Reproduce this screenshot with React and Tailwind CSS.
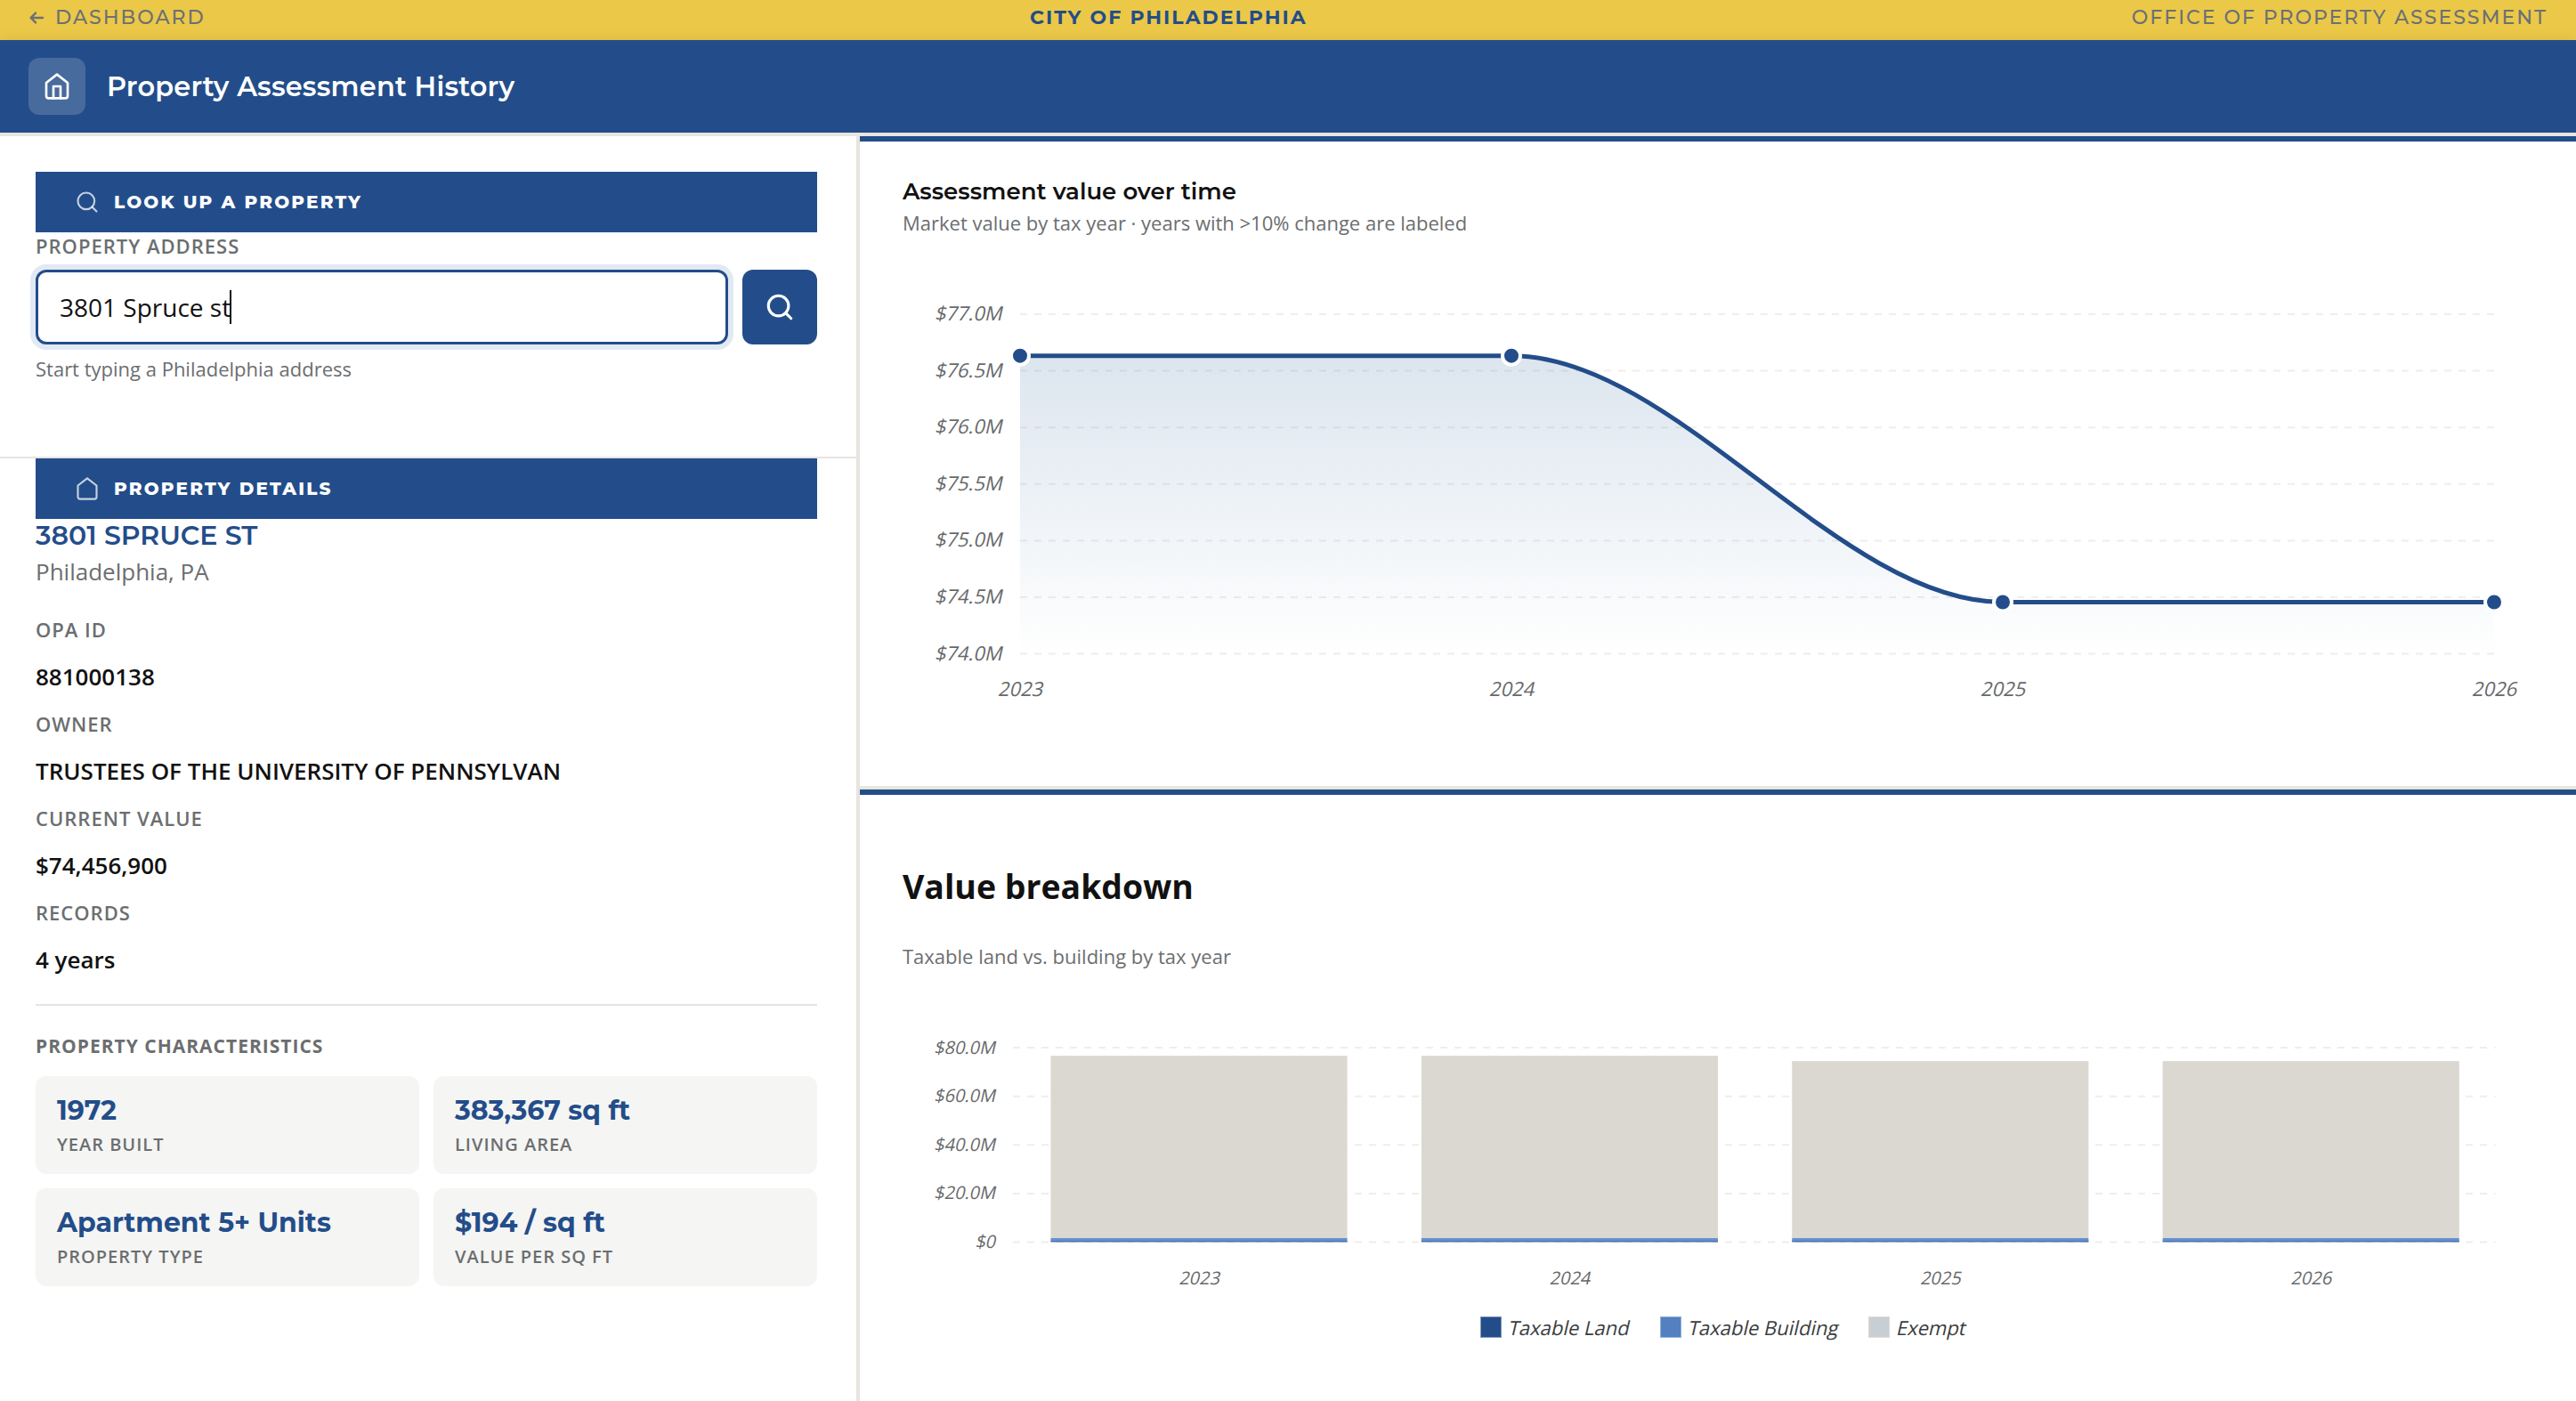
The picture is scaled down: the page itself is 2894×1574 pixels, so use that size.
import { Search } from 'lucide-react';

const DETAILS = [
  { label: 'OPA ID', value: '881000138' },
  { label: 'Owner', value: 'TRUSTEES OF THE UNIVERSITY OF PENNSYLVAN' },
  { label: 'Current Value', value: '$74,456,900' },
  { label: 'Records', value: '4 years' },
];

const CHARACTERISTICS = [
  { label: 'Year Built', value: '1972' },
  { label: 'Living Area', value: '383,367 sq ft' },
  { label: 'Property Type', value: 'Apartment 5+ Units' },
  { label: 'Value per sq ft', value: '$194 / sq ft' },
];

// values in millions
const HISTORY = [
  { year: '2023', total: 76.633 },
  { year: '2024', total: 76.633 },
  { year: '2025', total: 74.4569 },
  { year: '2026', total: 74.4569 },
];

const LEGEND = [
  { label: 'Taxable Land', swatch: 'bg-[#234d8a] border-[#7f97bc]' },
  { label: 'Taxable Building', swatch: 'bg-[#5580bf] border-[#8fb0de]' },
  { label: 'Exempt', swatch: 'bg-[#c8cfd4] border-[#e0dbd2]' },
];

function HouseIcon({ door = false, size, strokeWidth, className }) {
  return (
    <svg
      width={size}
      height={size}
      viewBox="0 0 24 24"
      fill="none"
      stroke="currentColor"
      strokeWidth={strokeWidth}
      strokeLinecap="round"
      strokeLinejoin="round"
      className={className}
    >
      <path d="M3 9l9-7 9 7v11a2 2 0 0 1-2 2H5a2 2 0 0 1-2-2z" />
      {door && <polyline points="9 22 9 12 15 12 15 22" />}
    </svg>
  );
}

function BackArrow() {
  return (
    <svg width="18" height="16" viewBox="0 0 18 16" fill="none" stroke="currentColor" strokeWidth="2.4" strokeLinecap="round" strokeLinejoin="round">
      <path d="M16 8H3M8 2.6L2.6 8L8 13.4" />
    </svg>
  );
}

function SectionHeader({ icon, children }) {
  return (
    <div className="flex h-[68px] items-center gap-4 bg-[#234d8a] px-11 text-white">
      {icon}
      <h2 className="font-['Montserrat',sans-serif] text-[20px] font-extrabold uppercase tracking-[2.2px]">{children}</h2>
    </div>
  );
}

// Slanted roman rather than the true italic, which is narrower
function AxisLabel({ x, y, anchor = 'middle', children }) {
  return (
    <text transform={`translate(${x} ${y}) skewX(-13)`} textAnchor={anchor} fill="#66696b">
      {children}
    </text>
  );
}

function LineChart() {
  const x = (i) => 132 + i * 552;
  const y = (v) => 87 + (77 - v) * 127.2;
  const top = y(HISTORY[0].total);
  const low = y(HISTORY[2].total);
  const base = y(74);
  const line = `M${x(0)} ${top}H${x(1)}C${x(1) + 184} ${top} ${x(2) - 184} ${low} ${x(2)} ${low}H${x(3)}`;
  const ticks = [77, 76.5, 76, 75.5, 75, 74.5, 74];

  return (
    <svg width="1832" height="560" viewBox="0 0 1832 560" className="overflow-visible text-[22px]">
      <defs>
        <linearGradient id="area-fill" x1="0" y1="0" x2="0" y2="1">
          <stop offset="0%" stopColor="#255d98" stopOpacity="0.16" />
          <stop offset="100%" stopColor="#255d98" stopOpacity="0" />
        </linearGradient>
      </defs>
      {ticks.map((t) => (
        <g key={t}>
          <line x1={x(0)} x2={x(3)} y1={y(t)} y2={y(t)} stroke="#efeeea" strokeWidth="2" strokeDasharray="8 8" />
          <AxisLabel x={111.5} y={y(t) + 7} anchor="end">{`$${t.toFixed(1)}M`}</AxisLabel>
        </g>
      ))}
      <path d={`${line}V${base}H${x(0)}Z`} fill="url(#area-fill)" />
      <path d={line} fill="none" stroke="#234d8a" strokeWidth="5" />
      {HISTORY.map((d, i) => (
        <g key={d.year}>
          <circle cx={x(i)} cy={y(d.total)} r="10" fill="#234d8a" stroke="#fff" strokeWidth="4" />
          <AxisLabel x={x(i)} y={516}>{d.year}</AxisLabel>
        </g>
      ))}
    </svg>
  );
}

function BarChart() {
  const left = 124;
  const band = 416.4;
  const y = (v) => 306.5 - v * 2.731;
  const ticks = [80, 60, 40, 20, 0];

  return (
    <svg width="1832" height="371" viewBox="0 0 1832 371" className="overflow-visible text-[20px]">
      {ticks.map((t) => (
        <g key={t}>
          <line x1={left} x2={left + band * 4} y1={y(t)} y2={y(t)} stroke="#efeeea" strokeWidth="2" strokeDasharray="8 8" />
          <AxisLabel x={104} y={y(t) + 6.5} anchor="end">{t ? `$${t.toFixed(1)}M` : '$0'}</AxisLabel>
        </g>
      ))}
      {HISTORY.map((d, i) => {
        const bx = left + 0.8 + band * (i + 0.1);
        return (
          <g key={d.year}>
            <rect x={bx} y={y(d.total)} width={band * 0.8} height={302 - y(d.total)} fill="#dbd8d1" />
            <rect x={bx} y="302" width={band * 0.8} height="4" fill="#6690cf" />
            <rect x={bx} y="305" width={band * 0.8} height="1.5" fill="#4a72b0" />
            <AxisLabel x={bx + band * 0.4} y={353.5}>{d.year}</AxisLabel>
          </g>
        );
      })}
    </svg>
  );
}

export default function App() {
  return (
    <div className="flex h-[1574px] w-[2894px] flex-col overflow-hidden bg-white font-['Open_Sans',sans-serif] text-[#111]">
      <div className="flex h-[45px] shrink-0 items-start justify-between bg-[#ebc848] px-8 font-['Montserrat',sans-serif] text-[22px] font-medium uppercase leading-[39px] tracking-[2px] text-[#6b7074]">
        <a className="flex items-center gap-3">
          <BackArrow />
          Dashboard
        </a>
        <span className="font-bold text-[#234d8a]">City of Philadelphia</span>
        <span>Office of Property Assessment</span>
      </div>

      <header className="flex h-[104px] shrink-0 items-center gap-6 bg-[#234d8a] px-8 shadow-[0_4px_16px_rgba(0,0,0,0.15)]">
        <div className="flex size-16 items-center justify-center rounded-xl bg-white/17 text-white">
          <HouseIcon door size={32} strokeWidth={2} />
        </div>
        <h1 className="mt-0.5 font-['Montserrat',sans-serif] text-[30.4px] font-semibold tracking-[0.2px] text-white">
          Property Assessment History
        </h1>
      </header>

      <div className="relative flex min-h-0 flex-1 border-t-4 border-[#e8e6df] bg-white">
        <aside className="w-[966px] shrink-0 border-r-4 border-[#e8e4df]">
          <section className="h-[362px] border-b-2 border-[#e8e4df] px-10 pt-10">
            <div className="w-[878px]">
              <SectionHeader icon={<Search size={28} strokeWidth={1.8} className="text-white/75" />}>
                Look up a property
              </SectionHeader>
              <label className="block text-[22px] font-semibold uppercase leading-[31px] tracking-[1px] text-[#6b6e70]">
                Property Address
              </label>
              <div className="mt-[11px] flex h-21 gap-4">
                <div className="flex flex-1 items-center rounded-xl border-3 border-[#234d8a] bg-white px-6 text-[28px] ring-6 ring-[#e1e9f3]">
                  3801 Spruce st
                  <span className="-ml-px h-[38px] w-0.5 bg-[#111]" />
                </div>
                <button className="flex w-21 items-center justify-center rounded-xl bg-[#234d8a] text-white">
                  <Search size={34} strokeWidth={2.2} />
                </button>
              </div>
              <p className="mt-3 text-[22px] leading-[31px] text-[#6b6e70]">Start typing a Philadelphia address</p>
            </div>
          </section>

          <section className="w-[958px] px-10">
            <SectionHeader icon={<HouseIcon size={28} strokeWidth={1.8} className="text-white/75" />}>
              Property details
            </SectionHeader>
            <h3 className="font-['Montserrat',sans-serif] text-[30px] font-semibold leading-[38px] text-[#234d8a]">3801 SPRUCE ST</h3>
            <p className="mt-[3px] text-[26px] leading-9 text-[#6b6e70]">Philadelphia, PA</p>

            <dl className="mt-[21px] leading-[53px]">
              {DETAILS.map((d) => (
                <div key={d.label}>
                  <dt className="text-[22px] font-semibold uppercase tracking-[1px] text-[#6b6e70]">{d.label}</dt>
                  <dd className="text-[26px] font-semibold">{d.value}</dd>
                </div>
              ))}
            </dl>

            <div className="mt-[23px] border-t-2 border-[#e8e4df] pt-[30px]">
              <h4 className="text-[21px] font-bold uppercase leading-[30px] tracking-[1px] text-[#6b6e70]">
                Property characteristics
              </h4>
              <div className="mt-[19px] grid grid-cols-2 gap-4">
                {CHARACTERISTICS.map((c) => (
                  <div key={c.label} className="h-[110px] rounded-xl bg-[#f5f5f3] px-6 pt-[21px]">
                    <div className="font-['Montserrat',sans-serif] text-[30px] font-bold leading-9 text-[#234d8a]">{c.value}</div>
                    <div className="mt-[5px] text-[20px] font-semibold uppercase leading-[30px] tracking-[1px] text-[#6b6e70]">{c.label}</div>
                  </div>
                ))}
              </div>
            </div>
          </section>
        </aside>

        <main className="flex-1">
          <section className="h-[734px] border-t-6 border-b-4 border-t-[#234d8a] border-b-[#e8e6df] px-12 pt-[39px]">
            <h3 className="font-['Montserrat',sans-serif] text-[26px] font-semibold leading-[34px]">Assessment value over time</h3>
            <p className="mt-[3px] mb-px text-[22px] leading-[30px] text-[#6b6e70]">
              Market value by tax year · years with &gt;10% change are labeled
            </p>
            <LineChart />
          </section>

          <section className="border-t-6 border-[#234d8a] px-12 pt-[77px]">
            <h3 className="text-[37.44px] font-bold leading-[52px]">Value breakdown</h3>
            <p className="mt-[37px] text-[22px] leading-[30px] text-[#6b6e70]">Taxable land vs. building by tax year</p>
            <BarChart />
            <div className="mt-[19px] flex h-6 items-center justify-center gap-9 pl-[10px]">
              {LEGEND.map((l) => (
                <div key={l.label} className="flex items-center gap-1.5">
                  <span className={`size-6 border ${l.swatch}`} />
                  <span className="origin-bottom -skew-x-13 text-[22px] leading-6 text-[#3a3d40]">{l.label}</span>
                </div>
              ))}
            </div>
          </section>
        </main>
      </div>
    </div>
  );
}
